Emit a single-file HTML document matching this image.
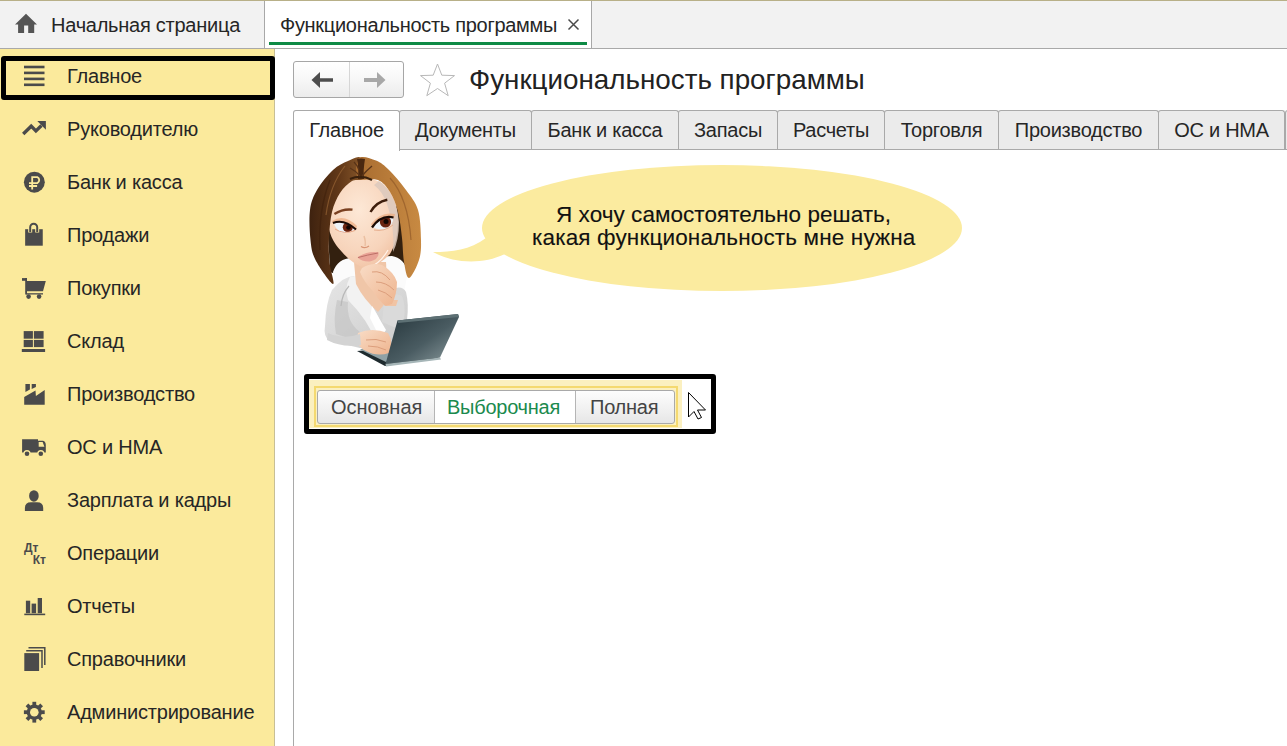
<!DOCTYPE html><html><head><meta charset="utf-8"><style>
*{box-sizing:border-box;margin:0;padding:0}
html,body{width:1287px;height:746px;overflow:hidden;background:#fff;font-family:"Liberation Sans",sans-serif;color:#333}
.a{position:absolute}
.t{position:absolute;font-size:20px;letter-spacing:-0.25px;white-space:nowrap;line-height:20px;color:#262626}
.tab{position:absolute;top:110px;height:40px;border:1px solid #a9a9a9;border-bottom:none;border-radius:3px 3px 0 0;background:#ebebeb;font-size:20px;letter-spacing:-0.25px;line-height:20px;text-align:center;padding-top:9px;color:#262626;white-space:nowrap}
</style></head><body>
<div class="a" style="left:0px;top:0px;width:1287px;height:1px;background:#b8b088;"></div>
<div class="a" style="left:0px;top:1px;width:1287px;height:47px;background:#f2f2f2;"></div>
<div class="a" style="left:0px;top:48px;width:1287px;height:1px;background:#a9a9a9;"></div>
<div class="t" style="left:51px;top:15px;">Начальная страница</div>
<div class="a" style="left:264px;top:1px;width:1px;height:47px;background:#a8a8a8;"></div>
<div class="a" style="left:265px;top:1px;width:326px;height:47px;background:#fff;"></div>
<div class="a" style="left:591px;top:1px;width:1px;height:47px;background:#a8a8a8;"></div>
<div class="t" style="left:280px;top:15px;letter-spacing:-0.3px">Функциональность программы</div>
<div class="a" style="left:269px;top:42px;width:318px;height:3px;background:#0e8a45;"></div>
<div class="a" style="left:0px;top:49px;width:274px;height:697px;background:#fbea9c;"></div>
<div class="a" style="left:274px;top:49px;width:1px;height:697px;background:#c8bf95;"></div>
<div class="t" style="left:67px;top:66px;letter-spacing:-0.2px">Главное</div>
<div class="t" style="left:67px;top:119px;letter-spacing:-0.2px">Руководителю</div>
<div class="t" style="left:67px;top:172px;letter-spacing:-0.2px">Банк и касса</div>
<div class="t" style="left:67px;top:225px;letter-spacing:-0.2px">Продажи</div>
<div class="t" style="left:67px;top:278px;letter-spacing:-0.2px">Покупки</div>
<div class="t" style="left:67px;top:331px;letter-spacing:-0.2px">Склад</div>
<div class="t" style="left:67px;top:384px;letter-spacing:-0.2px">Производство</div>
<div class="t" style="left:67px;top:437px;letter-spacing:-0.2px">ОС и НМА</div>
<div class="t" style="left:67px;top:490px;letter-spacing:-0.2px">Зарплата и кадры</div>
<div class="t" style="left:67px;top:543px;letter-spacing:-0.2px">Операции</div>
<div class="t" style="left:67px;top:596px;letter-spacing:-0.2px">Отчеты</div>
<div class="t" style="left:67px;top:649px;letter-spacing:-0.2px">Справочники</div>
<div class="t" style="left:67px;top:702px;letter-spacing:-0.2px">Администрирование</div>
<div class="a" style="left:1px;top:56px;width:274px;height:44px;background:transparent;border:5px solid #000;border-radius:3px"></div>
<div class="a" style="left:293px;top:149px;width:1px;height:597px;background:#a9a9a9;"></div>
<div class="a" style="left:293px;top:61px;width:111px;height:37px;background:linear-gradient(#ffffff,#f7f7f7 50%,#ececec);border:1px solid #a6a6a6;border-radius:3px"></div>
<div class="a" style="left:349px;top:62px;width:1px;height:35px;background:#d6d6d6;"></div>
<div class="t" style="left:469px;top:66px;font-size:27.8px;line-height:28px;letter-spacing:0;color:#222">Функциональность программы</div>
<div class="tab" style="left:399px;width:133px">Документы</div>
<div class="tab" style="left:531px;width:148px">Банк и касса</div>
<div class="tab" style="left:678px;width:100px">Запасы</div>
<div class="tab" style="left:777px;width:108px">Расчеты</div>
<div class="tab" style="left:884px;width:115px">Торговля</div>
<div class="tab" style="left:998px;width:161px">Производство</div>
<div class="tab" style="left:1158px;width:127px">ОС и НМА</div>
<div class="tab" style="left:1285px;width:20px"></div>
<div class="a" style="left:399px;top:149px;width:888px;height:1px;background:#a9a9a9;"></div>
<div class="tab" style="left:293px;width:107px;background:#fff;height:41px;z-index:2">Главное</div>
<svg class="a" style="left:0;top:0" width="1287" height="746" viewBox="0 0 1287 746">
<defs>
<linearGradient id="hairL" x1="0" y1="0" x2="1" y2="0"><stop offset="0" stop-color="#3e220f"/><stop offset="0.55" stop-color="#623818"/><stop offset="1" stop-color="#8a5a2c"/></linearGradient>
<linearGradient id="hairR" x1="0" y1="0" x2="1" y2="0"><stop offset="0" stop-color="#a86c30"/><stop offset="1" stop-color="#c88a42"/></linearGradient>
<radialGradient id="skin" cx="0.45" cy="0.35" r="0.75"><stop offset="0" stop-color="#fde8d6"/><stop offset="0.65" stop-color="#f7d4bb"/><stop offset="1" stop-color="#efbd9d"/></radialGradient>
<linearGradient id="lap" x1="0" y1="0" x2="1" y2="1"><stop offset="0" stop-color="#24343a"/><stop offset="0.55" stop-color="#4a5c62"/><stop offset="1" stop-color="#8e9ea0"/></linearGradient>
<linearGradient id="jack" x1="0" y1="0" x2="1" y2="1"><stop offset="0" stop-color="#e6e6e6"/><stop offset="1" stop-color="#cbcbcb"/></linearGradient>
<linearGradient id="hand" x1="0" y1="0" x2="1" y2="1"><stop offset="0" stop-color="#f9dcc6"/><stop offset="1" stop-color="#eeb48e"/></linearGradient>
</defs>
<!-- dark hair back -->
<path d="M327 210 L404 206 L406 270 Q384 276 366 276 Q340 276 330 272 Z" fill="#33200f"/>
<!-- white collar behind head -->
<path d="M333 272 Q338 258 352 258 L392 256 Q404 258 408 272 L404 292 L336 294 Z" fill="#fbfbfb"/>
<!-- jacket -->
<path d="M332 290 Q344 276 354 276 L372 304 L390 290 Q402 284 406 292 Q409 304 407 320 L400 332 L394 350 L360 348 L330 341 Q323 337 325 326 Q326 302 332 290 Z" fill="url(#jack)"/>
<path d="M337 300 Q333 318 336 334 L354 340 L360 332 Q346 322 348 302 Z" fill="#c4c4c4" opacity="0.7"/>
<path d="M350 277 L356 276 L378 316 L386 338 L376 342 Q368 320 348 300 Q344 288 350 277 Z" fill="#f2f2f2"/>
<path d="M349 286 Q342 294 341 306" stroke="#b8b8b8" stroke-width="1.2" fill="none"/>
<!-- neck -->
<path d="M354 262 L386 262 L388 300 L378 312 Q364 300 356 284 Z" fill="#f0c6a8"/>
<path d="M372 306 L386 330 L380 338 L370 318 Z" fill="#ffffff"/>
<!-- raised forearm -->
<path d="M384 302 Q392 290 402 296 Q406 306 404 320 L396 328 L382 322 Z" fill="#dadada"/>
<path d="M386 300 L398 300 L396 306 L386 306 Z" fill="#f1c4a4"/>
<!-- face -->
<path d="M343 185 Q361 172 382 183 Q398 196 398 222 Q398 241 390 254 Q379 266 366 268.5 Q352 264 342 252 Q328 238 327.5 218 Q329 196 343 185 Z" fill="url(#skin)"/>
<path d="M379 181 Q396 193 399 222 Q399 240 393 252 Q395 226 387 204 Q383 192 374 185 Z" fill="#dcc9bd" opacity="0.85"/>
<path d="M388 250 Q380 264 368 268" stroke="#fff3ea" stroke-width="1.2" fill="none"/>
<!-- hair left -->
<path d="M361.0 158.0 C358.3 155.2 352.7 159.0 348.0 161.0 C343.3 163.0 338.2 165.2 333.0 170.0 C327.8 174.8 320.8 183.3 317.0 190.0 C313.2 196.7 311.1 201.7 310.0 210.0 C308.9 218.3 309.6 231.7 310.5 240.0 C311.4 248.3 311.8 252.7 315.5 260.0 C319.2 267.3 330.7 283.7 333.0 284.0 C335.3 284.3 330.2 269.7 329.5 262.0 C328.8 254.3 328.6 246.3 329.0 238.0 C329.4 229.7 330.2 219.5 332.0 212.0 C333.8 204.5 336.7 198.2 340.0 193.0 C343.3 187.8 348.0 183.5 352.0 181.0 C356.0 178.5 362.5 181.8 364.0 178.0 C365.5 174.2 363.7 160.8 361.0 158.0 Z" fill="url(#hairL)"/>
<path d="M330 180 Q318 210 320 250" stroke="#3e200c" stroke-width="1.4" fill="none" opacity="0.6"/>
<path d="M345 166 Q330 185 326 215" stroke="#a06a38" stroke-width="1.2" fill="none" opacity="0.6"/>
<!-- hair right -->
<path d="M359.0 158.0 C362.0 155.1 371.0 158.5 376.0 160.5 C381.0 162.5 384.0 165.1 389.0 170.0 C394.0 174.9 401.2 183.3 406.0 190.0 C410.8 196.7 415.5 201.7 418.0 210.0 C420.5 218.3 420.8 231.7 421.0 240.0 C421.2 248.3 421.0 253.7 419.0 260.0 C417.0 266.3 411.5 277.7 409.0 278.0 C406.5 278.3 405.2 268.7 404.0 262.0 C402.8 255.3 403.0 246.3 402.0 238.0 C401.0 229.7 400.0 219.7 398.0 212.0 C396.0 204.3 393.3 197.3 390.0 192.0 C386.7 186.7 383.3 182.3 378.0 180.0 C372.7 177.7 361.2 181.7 358.0 178.0 C354.8 174.3 356.0 160.9 359.0 158.0 Z" fill="url(#hairR)"/>
<path d="M390 178 Q408 198 411 240" stroke="#8a5424" stroke-width="1.2" fill="none" opacity="0.6"/>
<path d="M357 159 Q361 158 365 159 Q363 170 364 179 L358 179 Q359 170 357 159 Z" fill="#4a2810"/><path d="M350 179 Q361 174 372 180" stroke="#3a200c" stroke-width="2" fill="none"/>
<path d="M350 168 Q356 171 360 176 M372 166 Q366 171 362 176 M354 162 Q358 166 359 170" stroke="#5a3418" stroke-width="1.3" fill="none"/>
<!-- eyebrows -->
<path d="M334.4 214 Q343 208.5 352.5 209.7" stroke="#7a4020" stroke-width="2.3" fill="none"/>
<path d="M370.5 212 Q376 202 387.3 199.7" stroke="#3e1e0c" stroke-width="2.4" fill="none"/>
<!-- eyes -->
<path d="M332 221 Q344 213 357 226 L356 230 Q344 219 333 224 Z" fill="#eba97e" opacity="0.7"/>
<path d="M371 224 Q381 211 395 214 L394 218 Q381 215 372.5 227 Z" fill="#eba97e" opacity="0.7"/>
<clipPath id="eL"><path d="M333.5 223 Q344 219 355.5 229.5 Q348 233.5 341 232.5 Q336 229 333.5 223 Z"/></clipPath>
<clipPath id="eR"><path d="M372.5 227 Q381 215.5 393 217.5 Q394 224 386 229 Q378 230.5 372.5 227 Z"/></clipPath>
<path d="M333.5 223 Q344 219 355.5 229.5 Q348 233.5 341 232.5 Q336 229 333.5 223 Z" fill="#eef3f8"/>
<g clip-path="url(#eL)"><circle cx="347.8" cy="227.3" r="5" fill="#6a2410"/><circle cx="348.5" cy="227.5" r="2.3" fill="#120602"/></g>
<path d="M333 223 Q344 218.5 356 229.5" stroke="#1a0a04" stroke-width="2.1" fill="none"/>
<path d="M372.5 227 Q381 215.5 393 217.5 Q394 224 386 229 Q378 230.5 372.5 227 Z" fill="#eef3f8"/>
<g clip-path="url(#eR)"><circle cx="385.5" cy="222" r="5.6" fill="#6a2410"/><circle cx="386" cy="221.5" r="2.5" fill="#120602"/></g>
<path d="M372 227.5 Q381 214.5 393.5 217.5" stroke="#1a0a04" stroke-width="2.3" fill="none"/>
<path d="M335 229 Q344 235 355 230.5" stroke="#e8a888" stroke-width="1" fill="none"/>
<path d="M374 230 Q384 232 393 225" stroke="#e8b090" stroke-width="1" fill="none"/>
<!-- nose -->
<path d="M364 236 Q366 242 365 246" stroke="#ebc0a2" stroke-width="1.5" fill="none"/>
<path d="M361 246.5 Q365 249 369 246" stroke="#d89474" stroke-width="1.2" fill="none"/>
<!-- lips -->
<path d="M357.5 257.5 Q367 250.5 378.5 252.3 Q379.5 259 370 261.5 Q362 262 357.5 257.5 Z" fill="#e9a396"/>
<path d="M358 257.5 Q367 255 378 253" stroke="#b86a62" stroke-width="0.9" fill="none"/>
<!-- chin hand -->
<path d="M362 268 Q372 262 382 265 Q394 272 397 282 Q397 294 392 304 L385 306 Q377 298 372 290 Q364 282 360 272 Z" fill="url(#hand)"/>
<path d="M372 272 Q382 270 390 280 M376 282 Q386 282 394 290 M378 290 Q386 292 392 298" stroke="#dc9e7c" stroke-width="1" fill="none"/>
<!-- laptop base -->
<path d="M357 351 L385 366 L440 358 L406 347 Z" fill="#1e2a2e"/>
<path d="M360 349.5 L386 362 L402 350 L380 342 Z" fill="#90a2a6"/>
<!-- hand on keyboard -->
<path d="M358 333 Q372 327 388 333 Q394 342 389 353 Q377 357 366 351 Q355 346 358 333 Z" fill="url(#hand)"/>
<path d="M366 340 Q376 338 386 342 M368 346 Q378 346 386 350" stroke="#dc9e7c" stroke-width="1" fill="none"/>
<path d="M328 333 Q344 340 360 334 L361 345 Q342 348 327 340 Z" fill="#d3d3d3"/>
<!-- laptop screen -->
<path d="M397.5 320.5 L458 314 L459 317 L440 357.5 L385.5 364 Z" fill="url(#lap)"/>
<path d="M397.5 320.5 L458 314 L459 317 L398 323 Z" fill="#5d7074"/>
<path d="M385.5 364 L440 357.5 L441 359.5 L386 366.5 Z" fill="#a6b6b8"/>
</svg>
<svg class="a" style="left:0;top:0" width="1287" height="746" viewBox="0 0 1287 746"><ellipse cx="722" cy="228" rx="240" ry="63" fill="#fbeb9f"/><path d="M486 238 C470 250 452 252 433 252 C450 262 480 266 505 254 Z" fill="#fbeb9f"/></svg>
<div class="t" style="left:556px;top:205px;font-size:22.5px;letter-spacing:0.05px;color:#111;-webkit-text-stroke:0.12px #111">Я хочу самостоятельно решать,</div>
<div class="t" style="left:532px;top:228px;font-size:22.5px;letter-spacing:0.15px;color:#111;-webkit-text-stroke:0.12px #111">какая функциональность мне нужна</div>
<div class="a" style="left:304px;top:374px;width:412px;height:60px;background:transparent;border:5px solid #000;border-radius:3px"></div>
<div class="a" style="left:309px;top:380px;width:373px;height:48px;background:#fbf0c0;"></div>
<div class="a" style="left:314px;top:386px;width:364px;height:41px;background:transparent;border:2px solid #f4d970"></div>
<div class="a" style="left:317px;top:390px;width:358px;height:34px;background:linear-gradient(#fdfdfd,#f0f0f0 60%,#e6e6e6);border:1px solid #a9a9a9;border-radius:3px"></div>
<div class="a" style="left:435px;top:391px;width:141px;height:32px;background:#fff;"></div>
<div class="a" style="left:434px;top:391px;width:1px;height:32px;background:#b5b5b5;"></div>
<div class="a" style="left:575px;top:391px;width:1px;height:32px;background:#b5b5b5;"></div>
<div class="t" style="left:331px;top:397px;color:#444;letter-spacing:0">Основная</div>
<div class="t" style="left:447px;top:397px;color:#1b8a4e">Выборочная</div>
<div class="t" style="left:590px;top:397px;color:#444">Полная</div>
<svg class="a" style="left:0;top:0" width="1287" height="746" viewBox="0 0 1287 746">
<path d="M26 13.8 L37 24.5 L34.2 24.5 L34.2 33 L28.2 33 L28.2 25.5 L24.1 25.5 L24.1 33 L18.1 33 L18.1 24.5 L15 24.5 Z" fill="#555"/>
<path d="M568.5 19.5 L578.5 29.5 M578.5 19.5 L568.5 29.5" stroke="#4a4a4a" stroke-width="1.45"/>
<g fill="#4b4b4b">
<rect x="24" y="65.7" width="20.5" height="2.6"/><rect x="24" y="71.6" width="20.5" height="2.6"/><rect x="24" y="77.6" width="20.5" height="2.6"/><rect x="24" y="83.5" width="20.5" height="2.6"/>
</g>
<path d="M23.2 134 L31.2 126.2 L35.9 131 L41.5 125.5" stroke="#4b4b4b" stroke-width="3.3" fill="none" stroke-linejoin="miter"/>
<path d="M37.3 121.1 L45.9 121.1 L45.9 129.7 Z" fill="#4b4b4b"/>
<circle cx="34.35" cy="182.2" r="10.45" fill="#4b4b4b"/>
<path d="M32.2 189.6 V177.1 H37.3 A3.3 3.3 0 0 1 37.3 183.1 H29 M29 186 H37.1" stroke="#fbea9c" stroke-width="1.8" fill="none"/>
<rect x="25.15" y="229.2" width="17.6" height="16.5" fill="#4b4b4b"/>
<path d="M30.2 232.5 V227.2 A3.5 3.5 0 0 1 37.2 227.2 V232.5" stroke="#fbea9c" stroke-width="4" fill="none"/>
<path d="M30.2 232 V227.2 A3.5 3.5 0 0 1 37.2 227.2 V232" stroke="#4b4b4b" stroke-width="2" fill="none"/>
<rect x="22" y="278.1" width="4.7" height="2.7" fill="#4b4b4b"/>
<path d="M25.2 278.1 H27 V280.9 H45.8 L43 291.3 H25.2 Z" fill="#4b4b4b"/>
<rect x="25.2" y="291" width="1.8" height="3.5" fill="#4b4b4b"/>
<rect x="26.3" y="293.2" width="16.7" height="1.3" fill="#4b4b4b"/>
<circle cx="28.6" cy="296.6" r="2.3" fill="#4b4b4b"/><circle cx="39.1" cy="296.6" r="2.3" fill="#4b4b4b"/>
<rect x="23.7" y="331.1" width="9.2" height="7.6" fill="#4b4b4b"/><rect x="33.9" y="331.1" width="9.7" height="7.6" fill="#4b4b4b"/>
<rect x="23.7" y="339.9" width="9.2" height="7.2" fill="#4b4b4b"/><rect x="33.9" y="339.9" width="9.7" height="7.2" fill="#4b4b4b"/>
<rect x="21.8" y="349" width="23.3" height="3" fill="#4b4b4b"/>
<path d="M24.2 397.1 L35.5 390.5 L35.9 395.9 L44.7 390 L44.7 404.7 L24.2 404.7 Z" fill="#4b4b4b"/>
<path d="M25.4 384 H29.9 V389.6 L25.4 391.9 Z M31.7 384 H35.9 V387 L31.7 389 Z" fill="#4b4b4b"/>
<path d="M22.1 439.2 H38 V440.8 H43 Q45.8 441.5 45.8 445 V452.4 H22.1 Z" fill="#4b4b4b"/>
<path d="M38.7 442 H42.6 L44.4 446.7 H38.7 Z" fill="#fbea9c"/>
<circle cx="27" cy="453.7" r="3.6" fill="#fbea9c"/><circle cx="40.8" cy="453.7" r="3.6" fill="#fbea9c"/>
<circle cx="27" cy="453.7" r="2.3" fill="#4b4b4b"/><circle cx="40.8" cy="453.7" r="2.3" fill="#4b4b4b"/>
<ellipse cx="33.9" cy="495.9" rx="4.8" ry="5.75" fill="#4b4b4b"/>
<path d="M24.9 510.9 V508 Q24.9 502.2 31 502.2 H37 Q43.2 502.2 43.2 508 V510.9 Z" fill="#4b4b4b"/>
<text x="24" y="552" font-family="Liberation Sans" font-weight="bold" font-size="12" fill="#4b4b4b">Дт</text>
<text x="32.7" y="564.2" font-family="Liberation Sans" font-weight="bold" font-size="12" fill="#4b4b4b">Кт</text>
<rect x="25.9" y="600.7" width="4.3" height="12.5" fill="#4b4b4b"/><rect x="31.6" y="603.6" width="4.5" height="9.6" fill="#4b4b4b"/><rect x="37.7" y="598" width="4.3" height="15.2" fill="#4b4b4b"/>
<rect x="24.3" y="613.6" width="20.9" height="1.6" fill="#4b4b4b"/>
<path d="M28.5 647.8 H44.8 V665" stroke="#4b4b4b" stroke-width="1.5" fill="none"/>
<path d="M26.2 650.7 H42 V668" stroke="#4b4b4b" stroke-width="1.5" fill="none"/>
<rect x="24.3" y="653.1" width="14.8" height="17.9" fill="#4b4b4b"/>
<g transform="translate(34.3 712.2)" fill="#4b4b4b">
<circle r="7.6"/>
<g id="teeth"><rect x="-1.9" y="-10.4" width="3.8" height="4"/><rect x="-1.9" y="6.4" width="3.8" height="4"/><rect x="-10.4" y="-1.9" width="4" height="3.8"/><rect x="6.4" y="-1.9" width="4" height="3.8"/></g>
<g transform="rotate(45)"><rect x="-1.9" y="-10.4" width="3.8" height="4"/><rect x="-1.9" y="6.4" width="3.8" height="4"/><rect x="-10.4" y="-1.9" width="4" height="3.8"/><rect x="6.4" y="-1.9" width="4" height="3.8"/></g>
<circle r="4.3" fill="#fbea9c"/>
</g>
<path d="M311.5 80 L320 72 L320 78.2 L333 78.2 L333 81.8 L320 81.8 L320 88 Z" fill="#4d4d4d"/>
<path d="M385.5 80 L377 72 L377 77.9 L364 77.9 L364 82.1 L377 82.1 L377 88 Z" fill="#a8a8a8"/>
<path d="M437.5 64 L441.8 75.2 L454.5 75.6 L444.6 83.2 L448.2 95.7 L437.5 88.5 L426.8 95.7 L430.4 83.2 L420.5 75.6 L433.2 75.2 Z" fill="none" stroke="#b8b8b8" stroke-width="1"/>
<path d="M688.5 392.5 L688.5 417 L694 411.5 L698 419 L701.5 417.5 L697.5 410 L705.5 410 Z" fill="#fff" stroke="#000" stroke-width="1"/>
</svg>
</body></html>
